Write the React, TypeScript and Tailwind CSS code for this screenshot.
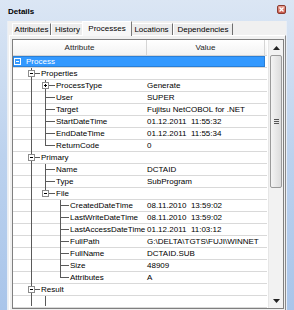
import React from "react";

type Row = { l: number; box?: "minus" | "plus"; label: string; value?: string; sel?: boolean };

const rows: Row[] = [
  { l: 0, box: "minus", label: "Process", sel: true },
  { l: 1, box: "minus", label: "Properties" },
  { l: 2, box: "plus", label: "ProcessType", value: "Generate" },
  { l: 2, label: "User", value: "SUPER" },
  { l: 2, label: "Target", value: "Fujitsu NetCOBOL for .NET" },
  { l: 2, label: "StartDateTime", value: "01.12.2011  11:55:32" },
  { l: 2, label: "EndDateTime", value: "01.12.2011  11:55:34" },
  { l: 2, label: "ReturnCode", value: "0" },
  { l: 1, box: "minus", label: "Primary" },
  { l: 2, label: "Name", value: "DCTAID" },
  { l: 2, label: "Type", value: "SubProgram" },
  { l: 2, box: "minus", label: "File" },
  { l: 3, label: "CreatedDateTime", value: "08.11.2010  13:59:02" },
  { l: 3, label: "LastWriteDateTime", value: "08.11.2010  13:59:02" },
  { l: 3, label: "LastAccessDateTime", value: "01.12.2011  11:03:12" },
  { l: 3, label: "FullPath", value: "G:\\DELTA\\TGTS\\FUJI\\WINNET" },
  { l: 3, label: "FullName", value: "DCTAID.SUB" },
  { l: 3, label: "Size", value: "48909" },
  { l: 3, label: "Attributes", value: "A" },
  { l: 1, box: "minus", label: "Result" },
  { l: 2, label: "" },
];

const cx = [4, 18, 32, 47];
const tx = [13, 28, 43, 57];
const padCls = ["pl-[13px]", "pl-[28px]", "pl-[43px]", "pl-[57px]"];

function TreeLines() {
  const line = "#5a5a5a";
  const els: React.ReactNode[] = [];
  const v = (x: number, y1: number, y2: number, k: string) =>
    els.push(<line key={k} x1={x + 0.5} x2={x + 0.5} y1={y1} y2={y2} stroke={line} strokeWidth={1} />);
  const h = (x1: number, x2: number, y: number, k: string) =>
    els.push(<line key={k} x1={x1} x2={x2 + 1} y1={y + 0.5} y2={y + 0.5} stroke={line} strokeWidth={1} />);
  v(18, 12, 250, "v1");
  v(32, 24, 90, "v2a");
  v(32, 108, 134, "v2b");
  v(47, 144, 222, "v3");
  v(32, 240, 250, "v2c");
  rows.forEach((r, i) => {
    if (r.l === 0 || !r.label) return;
    const y = 12 * i + 5;
    const c = cx[r.l];
    if (r.box) h(c + 4, tx[r.l] - 2, y, "h" + i);
    else h(c, tx[r.l] - 2, y, "h" + i);
  });
  rows.forEach((r, i) => {
    if (!r.box) return;
    const y = 12 * i + 5;
    const c = cx[r.l];
    const stroke = r.sel ? "#ffffff" : "#8c8c8c";
    const sign = r.sel ? "#ffffff" : "#000000";
    els.push(
      <g key={"b" + i}>
        <rect x={c - 3 + 0.5} y={y - 3 + 0.5} width={6} height={6} fill={r.sel ? "none" : "#ffffff"} stroke={stroke} strokeWidth={1} />
        <line x1={c - 1} x2={c + 2} y1={y + 0.5} y2={y + 0.5} stroke={sign} strokeWidth={1} />
        {r.box === "plus" && <line x1={c + 0.5} x2={c + 0.5} y1={y - 1} y2={y + 2} stroke={sign} strokeWidth={1} />}
      </g>
    );
  });
  return (
    <svg className="absolute left-0 top-0 pointer-events-none" width={134} height={250}>
      {els}
    </svg>
  );
}

function Tab({ label, w, sel }: { label: string; w: string; sel?: boolean }) {
  if (sel)
    return (
      <div
        className={`${w} h-[15px] -mx-[2px] -mb-[1px] relative z-10 bg-[#f7f7f7] border-l border-t border-r border-l-white border-t-white border-r-[#7a7a7a] flex items-center justify-center pb-[1px]`}
      >
        {label}
      </div>
    );
  return (
    <div className={`${w} h-[12px] bg-[#ececec] border-l border-t border-r border-l-white border-t-white border-r-[#6f6f6f] flex items-center justify-center`}>
      {label}
    </div>
  );
}

export default function App() {
  return (
    <div
      className="w-[294px] h-[310px] overflow-hidden flex flex-col bg-gradient-to-b from-[#dbe6f4] via-[#bcd2ee] to-[#a9c5ea] text-[8px] leading-[11px] text-black"
      style={{ fontFamily: '"Liberation Sans", Arial, sans-serif' }}
    >
      <div className="h-[21px] shrink-0 flex items-center justify-between pl-[8px] pr-[8px]">
        <span className="font-bold text-[8px] pt-[1px]">Details</span>
        <div className="w-[9px] h-[9px] rounded-[2px] border border-[#8b3b30] bg-gradient-to-b from-[#e9a295] to-[#c8574a] flex items-center justify-center mb-[2px]">
          <svg width="5" height="5" viewBox="0 0 5 5">
            <path d="M0.5 0.5 L4.5 4.5 M4.5 0.5 L0.5 4.5" stroke="#fff" strokeWidth="1.3" />
          </svg>
        </div>
      </div>
      <div className="flex-1 mx-[7px] mb-[6px] bg-[#f0f0f0] flex flex-col border-l border-r border-[#e8eef6]">
        <div className="h-[14px] shrink-0 flex items-end pl-[4px]">
          <Tab label="Attributes" w="w-[39px]" />
          <Tab label="History" w="w-[33px]" />
          <Tab label="Processes" w="w-[50px]" sel />
          <Tab label="Locations" w="w-[43px]" />
          <Tab label="Dependencies" w="w-[60px]" />
        </div>
        <div className="flex-1 ml-[1px] border border-l-white border-t-white border-r-[#8a8a8a] border-b-[#8a8a8a] pl-[2px] pt-[3px] pr-[1px] pb-[1px] flex">
          <div className="flex-1 border border-[#7f7f7f] bg-white flex overflow-hidden">
            <div className="w-[254px] flex flex-col overflow-hidden">
              <div className="h-[16px] shrink-0 flex border-b border-[#d5d5d5] bg-gradient-to-b from-white to-[#f3f3f3] text-[#1e1e1e]">
                <div className="w-[134px] border-r border-[#d5d5d5] flex items-center justify-center">Attribute</div>
                <div className="w-[118px] border-r border-[#d5d5d5] flex items-center justify-center">Value</div>
              </div>
              <div className="relative flex-1 overflow-hidden">
                {rows.map((r, i) => (
                  <div key={i} className="h-[12px] flex border-b border-[#d9d9d9]">
                    <div
                      className={`w-[252px] flex ${r.sel ? "bg-[#3399ff] text-white outline outline-1 -outline-offset-1 outline-[#2a7fd6]" : ""}`}
                    >
                      <div className={`w-[133px] ${padCls[r.l]} whitespace-nowrap overflow-hidden`}>{r.label}</div>
                      <div className="w-[119px] pl-[1px] whitespace-pre overflow-hidden">{r.value ?? ""}</div>
                    </div>
                  </div>
                ))}
                <TreeLines />
              </div>
            </div>
            <div className="w-[15px] ml-auto flex flex-col bg-[#f2f2f2] border-l border-[#e6e6e6]">
              <div className="h-[15px] flex items-center justify-center">
                <svg width="7" height="4" viewBox="0 0 7 4">
                  <path d="M0 4 L3.5 0 L7 4 Z" fill="#222" />
                </svg>
              </div>
              <div className="flex-1 px-[1px]">
                <div className="h-[133px] rounded-[2px] border border-[#9a9a9a] bg-gradient-to-r from-[#f4f4f4] to-[#dcdcdc] flex items-center justify-center">
                  <div className="flex flex-col gap-[1px]">
                    <div className="w-[5px] h-[1px] bg-[#555]" />
                    <div className="w-[5px] h-[1px] bg-[#555]" />
                    <div className="w-[5px] h-[1px] bg-[#555]" />
                  </div>
                </div>
              </div>
              <div className="h-[15px] flex items-center justify-center">
                <svg width="7" height="4" viewBox="0 0 7 4">
                  <path d="M0 0 L3.5 4 L7 0 Z" fill="#222" />
                </svg>
              </div>
            </div>
          </div>
        </div>
      </div>
    </div>
  );
}
